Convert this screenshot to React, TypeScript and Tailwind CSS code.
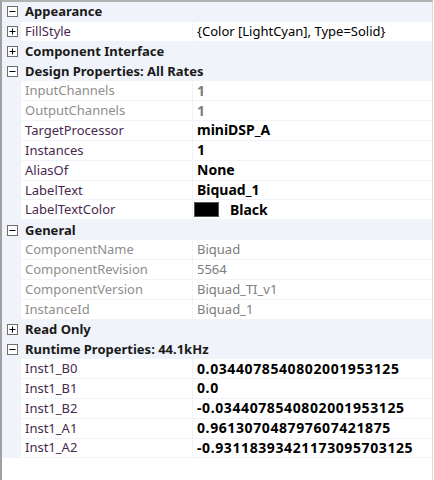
type Row =
	| { kind: "cat"; label: string; open: boolean }
	| {
			kind: "prop";
			label: string;
			value: string;
			bold?: boolean;
			dim?: boolean;
			expand?: boolean;
			swatch?: string;
			numeric?: boolean;
	  };

const rows: Row[] = [
	{ kind: "cat", label: "Appearance", open: true },
	{ kind: "prop", label: "FillStyle", value: "{Color [LightCyan], Type=Solid}", expand: true },
	{ kind: "cat", label: "Component Interface", open: false },
	{ kind: "cat", label: "Design Properties: All Rates", open: true },
	{ kind: "prop", label: "InputChannels", value: "1", dim: true, bold: true },
	{ kind: "prop", label: "OutputChannels", value: "1", dim: true, bold: true },
	{ kind: "prop", label: "TargetProcessor", value: "miniDSP_A", bold: true },
	{ kind: "prop", label: "Instances", value: "1", bold: true },
	{ kind: "prop", label: "AliasOf", value: "None", bold: true },
	{ kind: "prop", label: "LabelText", value: "Biquad_1", bold: true },
	{ kind: "prop", label: "LabelTextColor", value: "Black", bold: true, swatch: "#000000" },
	{ kind: "cat", label: "General", open: true },
	{ kind: "prop", label: "ComponentName", value: "Biquad", dim: true },
	{ kind: "prop", label: "ComponentRevision", value: "5564", dim: true },
	{ kind: "prop", label: "ComponentVersion", value: "Biquad_TI_v1", dim: true },
	{ kind: "prop", label: "InstanceId", value: "Biquad_1", dim: true },
	{ kind: "cat", label: "Read Only", open: false },
	{ kind: "cat", label: "Runtime Properties: 44.1kHz", open: true },
	{ kind: "prop", label: "Inst1_B0", value: "0.0344078540802001953125", bold: true, numeric: true },
	{ kind: "prop", label: "Inst1_B1", value: "0.0", bold: true, numeric: true },
	{ kind: "prop", label: "Inst1_B2", value: "-0.0344078540802001953125", bold: true, numeric: true },
	{ kind: "prop", label: "Inst1_A1", value: "0.961307048797607421875", bold: true, numeric: true },
	{ kind: "prop", label: "Inst1_A2", value: "-0.93118393421173095703125", bold: true, numeric: true },
];

// small +/- box used by categories and expandable properties
const Toggle = ({ open }: { open: boolean }) => (
	<svg width="11" height="11" viewBox="0 0 11 11" className="shrink-0">
		<rect x="0.5" y="0.5" width="10" height="10" fill="#ffffff" stroke="#6e6e6e" />
		<line x1="2.5" y1="5.5" x2="8.5" y2="5.5" stroke="#000000" />
		{!open && <line x1="5.5" y1="2.5" x2="5.5" y2="8.5" stroke="#000000" />}
	</svg>
);

const App = () => {
	return (
		<div
			className="w-[434px] h-[480px] bg-white overflow-hidden"
			style={{ fontFamily: '"Noto Sans", "Open Sans", sans-serif' }}
		>
			<div className="w-[433px] h-full border-t-2 border-l-2 border-t-[#b2b2b2] border-l-[#a0a0a0] border-r border-r-[#dcdcdc] flex flex-col">
				{rows.map((row, i) =>
					row.kind === "cat" ? (
						<div
							key={i}
							className="h-[19.85px] shrink-0 bg-[#f0f3f9] flex items-center pl-[5px] gap-[7px] text-[13px] font-bold text-[#1a1a1a] leading-none"
						>
							<Toggle open={row.open} />
							<span>{row.label}</span>
						</div>
					) : (
						<div key={i} className="h-[19.85px] shrink-0 flex bg-[#f0f3f9] leading-none">
							<div className="w-[19px] flex items-center pl-[5px]">
								{row.expand && <Toggle open={false} />}
							</div>
							<div
								className={`w-[171px] bg-white border-b border-[#f0f3f9] flex items-center pl-[4px] text-[13px] whitespace-nowrap overflow-hidden ${
									row.dim ? "text-[#8e8e8e]" : "text-[#47294f]"
								}`}
							>
								{row.label}
							</div>
							<div
								className={`flex-1 ml-px bg-white border-b border-[#f0f3f9] flex items-center gap-[11px] whitespace-nowrap overflow-hidden ${
									row.swatch ? "pl-px" : "pl-[4px]"
								} ${row.bold ? "font-bold text-[14px]" : "text-[13px]"} ${
									row.numeric ? "tracking-[0.6px]" : ""
								} ${row.dim ? "text-[#7d7d7d]" : "text-black"}`}
							>
								{row.swatch && (
									<span
										className="w-[25px] h-[15px] border border-[#555]"
										style={{ background: row.swatch }}
									/>
								)}
								<span>{row.value}</span>
							</div>
						</div>
					)
				)}
			</div>
		</div>
	);
};

export default App;
